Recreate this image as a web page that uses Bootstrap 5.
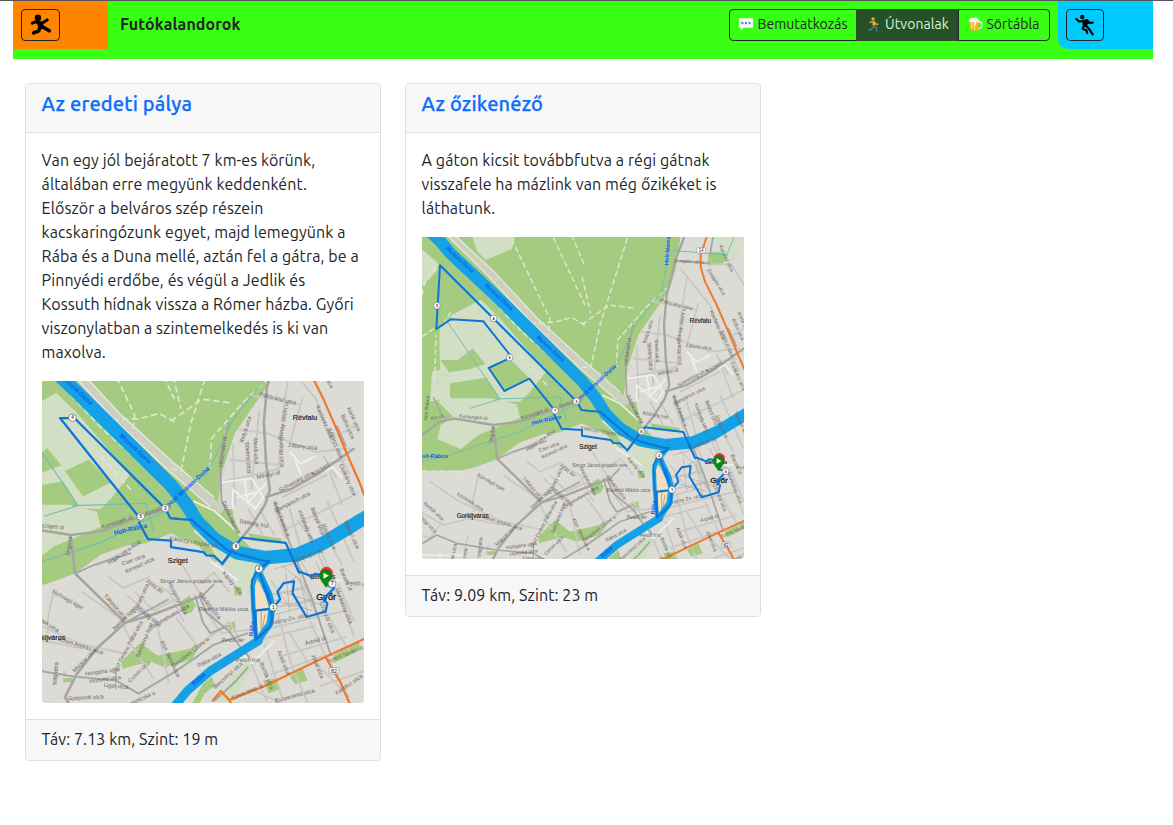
<!DOCTYPE html>
<html lang="hu">
<head>
<meta charset="utf-8">
<meta name="viewport" content="width=device-width, initial-scale=1">
<title>Futókalandorok</title>
<link href="https://cdn.jsdelivr.net/npm/bootstrap@5.3.0/dist/css/bootstrap.min.css" rel="stylesheet">
<style>
body{font-family:Ubuntu,"Noto Sans","Open Sans",sans-serif;background:#fff;border-top:1px solid #555;overflow:hidden}
.page{width:1140px;margin-left:13px}
.topbar{background:#39ff14;height:58px}
.side{width:95px;height:48px;padding:8px}
.side-l{background:#ff8400}
.side-r{background:#00cbff;border-bottom-left-radius:10px}
.side .btn{width:39px;height:32px;border-radius:4px}
.side-r .btn{width:38px}
.title{font-size:16px;font-weight:700;line-height:24px;padding:11px 0 0 12px;letter-spacing:.1px}
.navs{height:32px;margin:8px 8px 0 0}
.navs .btn{font-size:14px;line-height:20px;padding:3px 0 5px;white-space:nowrap;border-color:#212529;display:flex;align-items:center;justify-content:center;gap:3px;border-radius:4px;letter-spacing:.06px}
.navs .btn.on{background:#265126;color:#d5f5dc;border-color:#265126}
.card{border-radius:4px;border-color:#dfdfdf}
.card-header,.card-footer{background:#f7f7f7;border-color:#dfdfdf}
.card-header h5{font-size:20px;line-height:24px;font-weight:500;color:#0d6efd;letter-spacing:.18px;-webkit-text-stroke:.25px #0d6efd}
.card-header,.card-body .txt,.card-footer{text-indent:-.4px}
.txt{font-size:16px;line-height:24px;white-space:nowrap;letter-spacing:.095px}
.card-body .txt{margin-top:-1px;padding-bottom:1px}
.card-footer.txt{padding-top:7px;padding-bottom:9px}
.txt span{display:block}
.map{display:block;width:322px;height:322px;border-radius:0 0 3px 3px}
.map text,.bank text{font-family:"Liberation Sans",sans-serif;text-indent:0;letter-spacing:0}
.w1{width:128px}.w2{width:103px}.w3{width:92px}
</style>
</head>
<body>
<svg class="bank" width="0" height="0" style="position:absolute" aria-hidden="true">
<defs>
<g id="terrain">
 <rect x="-10" y="-10" width="1040" height="1050" fill="#dcdbd6"/>
 <!-- forests and fields -->
 <path fill="#a5cb80" d="M0 0H782L768 100 748 165 700 235 655 300 622 400 612 480 628 500 665 570 740 650 700 735 672 640 600 640 560 600 486 565 420 592 370 598 300 622 232 672 170 695 130 706 0 708Z"/>
 <g fill="#d3dfc5">
  <path d="M0 38 55 85 50 108 0 158ZM155 0H285L276 42 198 75 172 50ZM58 290 95 240 182 194 235 245 378 410 330 470 300 500H235L190 430 90 445V490L30 500 36 410 60 405Z"/>
  <path d="M70 486H200L290 508 300 548 225 580 175 600 122 642 52 612 62 570 100 545 55 500ZM870 0H980L945 70 920 100 912 50ZM566 535 620 590 690 628 745 636 712 665 700 730 665 700 640 660 615 645 590 600 545 560Z"/>
 </g>
 <g fill="#a5cb80">
  <path d="M60 374 112 376 158 340 196 386 150 402 88 412ZM205 400 268 370 328 430 253 468ZM92 450 200 428 240 490H92ZM866 52 905 50 922 72 905 88 862 92ZM630 505 648 500 655 535 672 565 660 568 640 545ZM690 565 780 580 775 592 700 585ZM514 745 535 730 552 755 540 775 518 780ZM654 712 672 706 674 730 655 730ZM640 805 655 798 658 820 640 822ZM380 880 405 855 450 890 540 870 552 855 560 868 540 900 470 920 430 905 380 918 358 925 355 905ZM200 950 225 948 224 960 200 960Z"/>
  <path d="M915 890 985 850V875L920 908ZM570 965 595 945 602 970 575 990 560 1020H540ZM800 945 835 925 848 955 815 965ZM730 955 765 950 770 980 745 990Z"/>
 </g>
 <path d="M600 1010 620 980 690 895 712 910 680 955 650 1010Z" fill="#cddfc0"/>
 <!-- embankment road -->
 <path d="M92 0 210 115 340 255 480 385 590 480 625 505" fill="none" stroke="#cdcfc0" stroke-width="22"/>
 <path d="M80 0 200 118 330 258 478 398 590 495M104 0 222 110 350 248 492 378 600 470" fill="none" stroke="#e6e7dd" stroke-width="4"/>
 <g fill="none" stroke="#dfe6cd" stroke-width="4.5" stroke-dasharray="17 9">
  <path d="M75 50 185 160 300 285 470 435M275 12 390 252 385 300M400 8 495 210M455 0 495 95M330 265 400 262 455 248 495 270M486 268 568 210 645 220M486 395 512 400 540 270 625 0M486 125 512 235M590 395 593 315 680 215 740 160M6 305 50 275M42 490 48 300M92 230 60 285M6 708 140 710M300 360 380 450M6 180 12 150 55 90"/>
 </g>
 <g fill="none" stroke="#b7c3a7" stroke-width="1.6"><path d="M0 0 55 90M155 190 330 90M6 486 90 410M470 60 486 150M605 430 625 350M585 430 640 330M590 450 635 390"/></g>
 <!-- creeks -->
 <g fill="none" stroke="#73bdb2" stroke-width="3"><path d="M82 260 240 492 150 520M225 492 420 486 440 560M0 680 80 664 160 635 300 590 400 540 486 500M745 0 742 80 725 170 650 265 605 360 575 415M755 46 920 60 945 0M340 925V980"/></g>
 <!-- small streets -->
 <g fill="none" stroke="#c8c7c4" stroke-width="5">
  <path d="M780 100 870 210 910 320 960 410M860 88H935L972 150M700 200 830 225M660 290 740 300 870 350 960 340M650 330 655 490M690 320 700 450M720 240 700 440M800 130 785 230 770 410M835 205 800 330M640 370 780 385M620 430 770 395M780 470 900 410M890 360 925 420M900 380 950 370M905 400 940 490M940 300 972 280"/>
  <path d="M30 740 120 800 250 860 370 885M175 720 160 790 160 830M60 870 30 910 0 900M0 830 70 870 150 850 250 870M250 720 350 790 380 850M290 650 370 610M320 680 360 710 430 680M390 720 440 770 500 740M440 700 480 720 520 800M380 860 440 950M450 810 480 960M500 790 560 870M510 640 560 720 600 790M560 700 600 670 640 720M570 760 620 830 700 820M590 840 640 800 670 850M540 880 610 820M480 940 560 890M130 970 145 900M175 970 180 910M205 930 200 960M370 730 450 800"/>
  <path d="M770 780 800 900 850 1020M690 890 740 1010M735 860 780 1000M800 830 850 910M855 800 895 890M900 780 960 880M930 700 972 800M880 600 972 840M840 540 920 720M800 500 840 640M820 530 890 620M860 500 940 650M900 480 970 640M740 730 850 710M770 760 860 740M740 820 860 790 950 770M710 850 870 810M780 890 950 840M870 910 960 1000M750 940 890 890M700 980 790 1020M880 970 1000 930M780 560 900 500 980 460M690 500 730 570M720 500 760 570M760 500 790 580"/>
 </g>
 <g fill="none" stroke="#efefec" stroke-width="5">
  <path d="M620 430 700 420 730 470 710 500 650 450 650 500M680 420 690 485 740 430M660 470 720 455M800 350 830 380 870 360M815 370 830 410M895 400 915 390 940 420M0 960H140M20 970V1010M60 962V1010M545 480 600 505 660 560M590 640 665 690M900 690 940 690M670 880 700 910 760 850"/>
 </g>
 <!-- main grey roads -->
 <g fill="none" stroke="#a5a5a2" stroke-width="7" stroke-linejoin="round">
  <path d="M795 0 768 70 740 180 732 270 738 380 748 450 735 490 700 545 664 589 620 650M735 470 800 450 880 405 972 340M0 605 60 560 105 551 220 570 300 560 380 530 486 496M220 570 232 672 365 802 290 870 235 940 205 1000 225 1030M365 802 440 780 570 730"/>
  <path d="M880 0 870 60M760 480 800 590M640 270 616 370 620 480 650 540M950 335 925 280M780 78 870 85M40 486 66 540 80 552M570 730 600 700M365 802 480 740M550 730 570 800 590 830 640 810M232 672 280 650 380 618M0 930 50 900 110 925 230 945 340 955 400 990 500 930 600 860 690 830M560 730 580 775 640 825 672 870 695 895M800 590 860 740 910 890M664 589 700 545M690 920 655 960 600 1010" stroke-width="5"/>
 </g>
 <g fill="none" stroke="#b2b0ab" stroke-width="2.2">
  <path d="M780 650 840 700 870 780M750 690 800 760 870 740M760 660 830 640 860 690M790 700 820 680 860 760M800 720 850 700M790 670 800 770M820 640 850 790M750 740 860 770M780 720 900 760M900 710 870 640M765 780 840 760"/>
 </g>
 <path d="M705 672 752 765 728 835 712 850 704 765Z" fill="#f1dfc2"/>
 <path d="M708 770H745M725 770V840M735 780 728 820" fill="none" stroke="#b5a996" stroke-width="3"/>
 <!-- rivers -->
 <g fill="none" stroke="#15a1e5" stroke-linecap="round" stroke-linejoin="round">
  <path stroke-width="36" d="M28-12 62 20 92 56 230 185 372 325 486 438 528 490 556 535 600 580 662 617 735 630 820 622 890 591 972 541 1020 512"/>
  <path stroke-width="18" d="M745 635 717 665 745 725 754 760 748 805 713 855"/>
  <path stroke-width="12" d="M712 670 702 705 704 760 712 850"/>
  <path stroke-width="23" d="M718 850 660 886 590 930 530 982 490 1030"/>
 </g>
 <!-- highway -->
 <path d="M862 0 842 60V95L855 140 890 210 925 290 950 350 985 430 1020 520M1020 835 895 893 730 972 640 1007 618 983 595 1010M640 1007 655 1030M895 893 935 960 965 1030" fill="none" stroke="#f07a2a" stroke-width="6" stroke-linejoin="round"/>
 <g font-size="14" text-anchor="middle" fill="#333"><rect x="830" y="38" width="26" height="16" rx="3" fill="#fff" stroke="#555"/><text x="843" y="51">14</text><rect x="905" y="921" width="26" height="17" rx="3" fill="#eee" stroke="#555"/><text x="918" y="935">82</text></g>
 <!-- street names -->
 <g font-size="15" fill="#686662" text-anchor="middle">
  <text transform="translate(805 84) rotate(3)">Zemplén utca</text><text transform="translate(915 72) rotate(65)">Kandisz utca</text><text transform="translate(885 143) rotate(58)">Zsuppán utca</text>
  <text transform="translate(768 213) rotate(14)">Pokorányi utca</text><text transform="translate(888 272) rotate(66)">Kardántz utca</text><text transform="translate(917 328) rotate(68)">Kállóczi utca</text><text transform="translate(950 285) rotate(66)">Bölcs utca</text><text transform="translate(966 265) rotate(66)">Körte utca</text>
  <text transform="translate(788 270) rotate(-80)">Rónay Jácint u</text><text transform="translate(688 292) rotate(-72)">Ibolya utca</text><text transform="translate(628 350) rotate(-82)">Hédervári út</text><text transform="translate(685 365) rotate(86)">Sövény utca</text><text transform="translate(706 348) rotate(86)">Mező utca</text><text transform="translate(775 350) rotate(88)">György utca</text><text transform="translate(835 340) rotate(6)">Zátony utca</text><text transform="translate(745 415) rotate(-12)">Mihályi út</text>
  <text transform="translate(820 432) rotate(-28)">Szövetség utca</text><text transform="translate(885 400) rotate(-33)">Ráckert</text><text transform="translate(950 425) rotate(66)">Csákány utca</text><text transform="translate(810 487) rotate(-27)">Damjanich utca</text><text transform="translate(705 545) rotate(10)">Báthory híd</text><text transform="translate(640 525) rotate(65)">Dózsa rakpart</text><text transform="translate(775 530) rotate(68)">Erkel Ferenc u</text><text transform="translate(840 550) rotate(68)">Kisfaludy utca</text><text transform="translate(870 535) rotate(68)">Bástya utca</text><text transform="translate(900 575) rotate(66)">Jósika utca</text><text transform="translate(850 630) rotate(-20)">Dunakapu tér</text><text transform="translate(945 690) rotate(66)">Baross út</text><text transform="translate(960 570) rotate(66)">Vasvári utca</text><text transform="translate(985 704) rotate(3)">Petőfi utca</text>
  <text transform="translate(160 551) rotate(5)">Kunszigeti út</text><text transform="translate(345 540) rotate(-18)">Kunszigeti út</text><text transform="translate(450 507) rotate(-20)">Kunsziget</text><text transform="translate(52 552) rotate(-12)">Kis út</text><text transform="translate(25 520) rotate(-85)">Holt Rábca</text><text transform="translate(220 600) rotate(-84)">Orgona</text><text transform="translate(365 620) rotate(-35)">Hajós utca Alsó</text><text transform="translate(388 640) rotate(-20)">Cser utca</text><text transform="translate(405 654) rotate(-25)">Kereszt utca</text><text transform="translate(545 594) rotate(10)">Kálóczy / Fopán tér</text><text transform="translate(210 745) rotate(30)">Nyírvágó liget</text><text transform="translate(148 804) rotate(32)">Köztelek utca</text><text transform="translate(38 832) rotate(42)">Bartók utca</text><text transform="translate(20 870) rotate(45)">Tölgy utca</text><text transform="translate(245 868) rotate(17)">Achim András utca</text><text transform="translate(335 763) rotate(48)">Töltésút utca</text><text transform="translate(365 795) rotate(-45)">Nemes liget</text><text transform="translate(410 740) rotate(-65)">Kölcsey utca</text><text transform="translate(440 710) rotate(38)">Állás tér</text><text transform="translate(425 790) rotate(38)">Ifjúság utca</text><text transform="translate(540 696)">Simor János püspök tere</text><text transform="translate(500 740) rotate(62)">Rozgonyi utca</text><text transform="translate(485 790) rotate(-30)">Semmelweis utca</text><text transform="translate(375 870) rotate(-62)">Liszt Ferenc Pálfai utca</text><text transform="translate(260 905) rotate(-45)">Magyar utca</text><text transform="translate(305 936) rotate(-8)">Hungária utca</text><text transform="translate(312 957) rotate(-8)">Honvéd utca</text><text transform="translate(340 975) rotate(5)">Liget utca</text><text transform="translate(185 937) rotate(-85)">Vág utca</text><text transform="translate(105 955) rotate(-80)">Vak utca</text><text transform="translate(138 966) rotate(-80)">Fa utca</text><text transform="translate(260 1005) rotate(-3)">Gyepszél utca</text><text transform="translate(420 850) rotate(-68)">Bercsényi liget</text><text transform="translate(405 935) rotate(-45)">Corvin utca</text><text transform="translate(480 900) rotate(65)">Kiss János utca</text><text transform="translate(540 885) rotate(-38)">Mészáros Lőrinc u</text><text transform="translate(590 905) rotate(-28)">Rába utca</text><text transform="translate(645 700) rotate(50)">Károly utca</text><text transform="translate(585 760) rotate(52)">Kálvária utca</text><text transform="translate(625 771)">Radnóti Miklós utca</text><text transform="translate(650 853)">Petőfi tér</text><text transform="translate(690 905)">Petőfi híd</text><text transform="translate(640 945) rotate(-42)">Bercsényi utca</text><text transform="translate(800 797) rotate(-12)">Bajcsy-Zs. utca</text><text transform="translate(870 854) rotate(-15)">Árpád út</text><text transform="translate(780 910) rotate(68)">Aradi utca</text><text transform="translate(735 945) rotate(68)">Bartók utca</text><text transform="translate(815 1000) rotate(-15)">Eszperantó utca</text><text transform="translate(870 920) rotate(68)">Jókai utca</text><text transform="translate(895 790) rotate(68)">Czuczor utca</text><text transform="translate(940 760) rotate(68)">Munkácsy utca</text><text transform="translate(950 890) rotate(-23)">Szent István út</text><text transform="translate(690 990) rotate(-23)">Szent Imre út</text><text transform="translate(960 970) rotate(-35)">Kertész utca</text><text transform="translate(405 1010) rotate(-25)">Szabolcska u</text>
 </g>
 <g font-size="17" font-weight="700" fill="#0e5cf0" text-anchor="middle">
  <text transform="translate(116 78) rotate(43)">Mosoni-Duna</text><text transform="translate(233 190) rotate(43)">Mosoni-Duna</text><text transform="translate(388 345) rotate(43)">Mosoni-Duna</text><text transform="translate(536 445) rotate(-43)">Holt Mosoni-Duna</text><text transform="translate(748 45) rotate(-86)">Holt Marcal</text><text transform="translate(380 560) rotate(-13)">Holt-Rábca</text><text transform="translate(38 668)">Holt-Rábca</text><text transform="translate(735 725) rotate(66)">Rába</text><text transform="translate(706 818) rotate(-84)">Rába</text><text transform="translate(563 955) rotate(-42)">Rába</text>
 </g>
 <g font-size="19" fill="#222" stroke="#222" stroke-width=".5" text-anchor="middle"><text x="841" y="265">Révfalu</text><text x="504" y="643">Sziget</text><text x="158" y="849">Gorkijváros</text><text x="888" y="686" font-size="17">Belváros</text><text x="897" y="743" font-size="24" stroke-width="1">Győr</text></g>
</g>
<g id="cityroute" fill="none" stroke="#0b76d7" stroke-width="6" stroke-linejoin="round">
 <path d="M471 500 484 525 510 528 540 530 575 560 635 610 665 621 730 638 747 639 717 661 750 750 754 790 748 812 711 848 710 770 756 764 775 740 768 720 785 697 812 693 808 724 845 787 896 772 900 750 888 740 918 711 896 701M896 701 885 675 866 673 860 680 830 668 825 669 790 591 674 577 664 589 622 646 600 625 580 624 572 615 486 602V585L425 581 400 534"/>
 <path d="M717 661 700 690 704 760 712 848" stroke-width="5"/>
</g>
<g id="startpin"><circle cx="898" cy="671" r="17" fill="#e63131"/><path d="M896 708C888 694 880 688 880 678a16 16 0 0 1 32 0C912 688 904 694 896 708Z" fill="#078b12" stroke="#06690d" stroke-width="1.5"/><path d="M890 670V686L904 678Z" fill="#fff"/></g>
</defs>
</svg>

<div class="page">
 <header class="topbar d-flex align-items-start">
  <div class="side side-l"><a class="btn btn-outline-dark btn-sm p-0 d-flex align-items-center justify-content-center" href="#" aria-label="Előző">
   <svg width="22" height="22" viewBox="0 0 22 22"><circle cx="8" cy="3.8" r="3.2"/><path d="M2.3 9.2 5.5 7.9 12 9.2 17.2 5.9" fill="none" stroke="#000" stroke-width="3" stroke-linecap="round" stroke-linejoin="round"/><path d="M5.5 6.8 12.5 7.5 14 13.5 8.8 14Z"/><path d="M11.5 12.3 19.3 16.8M10 13 8.8 16.8 3.6 18.9" fill="none" stroke="#000" stroke-width="3.5" stroke-linecap="round" stroke-linejoin="round"/></svg></a></div>
  <div class="title flex-grow-1">Futókalandorok</div>
  <div class="btn-group navs">
   <a class="btn btn-outline-dark w1" href="#"><svg width="16" height="16" viewBox="0 0 17 16"><path d="M2 2H15Q16 2 16 3V11Q16 12 15 12H6L3 15V12H2Q1 12 1 11V3Q1 2 2 2Z" fill="#f4f5f6"/><g fill="#2488d4"><circle cx="4.7" cy="7" r="1.2"/><circle cx="8.5" cy="7" r="1.2"/><circle cx="12.3" cy="7" r="1.2"/></g></svg>Bemutatkozás</a>
   <a class="btn btn-outline-dark on w2" href="#"><svg width="16" height="17" viewBox="0 0 16 17"><circle cx="7" cy="3" r="1.8" fill="#e3a52b"/><path d="M7.8 5.3 8 9.5" stroke="#f0b323" stroke-width="2.8"/><path d="M6.5 5.8 3.5 6.5M9 6.5 10.5 8.5 12.5 8" fill="none" stroke="#dba233" stroke-width="1.3"/><path d="M8 10 10.5 12V15.5M7.5 10.5 5.5 13.2 2.5 14.5" fill="none" stroke="#55777b" stroke-width="1.7"/></svg>Útvonalak</a>
   <a class="btn btn-outline-dark w3" href="#"><svg width="15" height="16" viewBox="0 0 16 16"><path d="M10 6H13.5Q14.5 6 14.5 7V11Q14.5 12 13 12.5L10 13" fill="none" stroke="#e2e6d6" stroke-width="1.7"/><path d="M2 4H11L11.5 14Q7 16.5 2.5 14Z" fill="#f7b51d"/><path d="M4 7V13M7 7V14" stroke="#ffe18b" stroke-width="1.3"/><path d="M1.5 6Q0 4 2 3 3 0 6 1.5 9 0 10 2 13 3 11.5 6L9 5.5 8.5 9H6.5L6 6Z" fill="#f5f3e7"/></svg>Sörtábla</a>
  </div>
  <div class="side side-r"><a class="btn btn-outline-dark btn-sm p-0 d-flex align-items-center justify-content-center" href="#" aria-label="Következő">
   <svg width="22" height="22" viewBox="0 0 22 22"><circle cx="8.3" cy="3" r="2.2"/><path d="M8.5 6 13.7 5 14.7 8 12.7 12.6 8.7 13Z"/><path d="M9.5 7.2 5 7.5 2.3 5M13.3 6.5 15.3 9 18.6 8.6M11.5 11.5 15 14.8 18.7 20.3M10 12 8.6 14.8 12.6 16.6 13.2 19" fill="none" stroke="#000" stroke-width="2.2" stroke-linejoin="round" stroke-linecap="round"/></svg></a></div>
 </header>

 <main class="row g-0 align-items-start pt-4">
  <div class="col-4 px-2 mx-0"><div class="card mx-1">
   <div class="card-header"><h5 class="mb-2">Az eredeti pálya</h5></div>
   <div class="card-body">
    <p class="txt mb-3"><span>Van egy jól bejáratott 7 km-es körünk,</span><span>általában erre megyünk keddenként.</span><span>Először a belváros szép részein</span><span>kacskaringózunk egyet, majd lemegyünk a</span><span>Rába és a Duna mellé, aztán fel a gátra, be a</span><span>Pinnyédi erdőbe, és végül a Jedlik és</span><span>Kossuth hídnak vissza a Rómer házba. Győri</span><span>viszonylatban a szintemelkedés is ki van</span><span>maxolva.</span></p>
    <svg class="map" viewBox="144.3 161.9 853 853" role="img" aria-label="Az eredeti pálya térképe">
     <use href="#terrain"/>
     <path d="M471 500 230 260H192L400 521" fill="none" stroke="#0b76d7" stroke-width="6" stroke-linejoin="round"/>
     <use href="#cityroute"/><use href="#startpin"/>
     <g fill="#fff" stroke="#747474" stroke-width="2"><circle cx="225" cy="259" r="10"/><circle cx="406" cy="521" r="10"/><circle cx="471" cy="499" r="10"/><circle cx="658" cy="600" r="10"/><circle cx="719" cy="659" r="10"/><circle cx="757" cy="761" r="10"/><circle cx="913" cy="699" r="10"/></g>
     <g font-size="12" font-weight="700" text-anchor="middle" fill="#333"><text x="225" y="263">4</text><text x="406" y="525">5</text><text x="471" y="503">3</text><text x="658" y="604">6</text><text x="719" y="663">2</text><text x="757" y="765">1</text><text x="913" y="703">7</text></g>
    </svg>
   </div>
   <div class="card-footer txt">Táv: 7.13 km, Szint: 19 m</div>
  </div></div>
  <div class="col-4 px-2"><div class="card mx-1">
   <div class="card-header"><h5 class="mb-2">Az őzikenéző</h5></div>
   <div class="card-body">
    <p class="txt mb-3"><span>A gáton kicsit továbbfutva a régi gátnak</span><span>visszafele ha mázlink van még őzikéket is</span><span>láthatunk.</span></p>
    <svg class="map" viewBox="6 6 966 966" role="img" aria-label="Az őzikenéző térképe">
     <use href="#terrain"/>
     <path d="M471 500 60 91 49 282 92 253 190 259 270 360 268 370 206 399 253 468 328 431 400 521" fill="none" stroke="#0b76d7" stroke-width="6" stroke-linejoin="round"/>
     <use href="#cityroute"/><use href="#startpin"/>
     <g fill="#fff" stroke="#747474" stroke-width="2"><circle cx="51" cy="212" r="10"/><circle cx="221" cy="250" r="10"/><circle cx="269" cy="368" r="10"/><circle cx="405" cy="527" r="10"/><circle cx="469" cy="499" r="10"/><circle cx="664" cy="589" r="10"/><circle cx="717" cy="661" r="10"/><circle cx="756" cy="764" r="10"/><circle cx="917" cy="709" r="10"/></g>
     <g font-size="12" font-weight="700" text-anchor="middle" fill="#333"><text x="51" y="216">5</text><text x="221" y="254">4</text><text x="269" y="372">6</text><text x="405" y="531">7</text><text x="469" y="503">3</text><text x="664" y="593">8</text><text x="717" y="665">2</text><text x="756" y="768">1</text><text x="917" y="713">9</text></g>
    </svg>
   </div>
   <div class="card-footer txt">Táv: 9.09 km, Szint: 23 m</div>
  </div></div>
 </main>
</div>
<script src="https://cdn.jsdelivr.net/npm/bootstrap@5.3.0/dist/js/bootstrap.bundle.min.js"></script>
</body>
</html>
